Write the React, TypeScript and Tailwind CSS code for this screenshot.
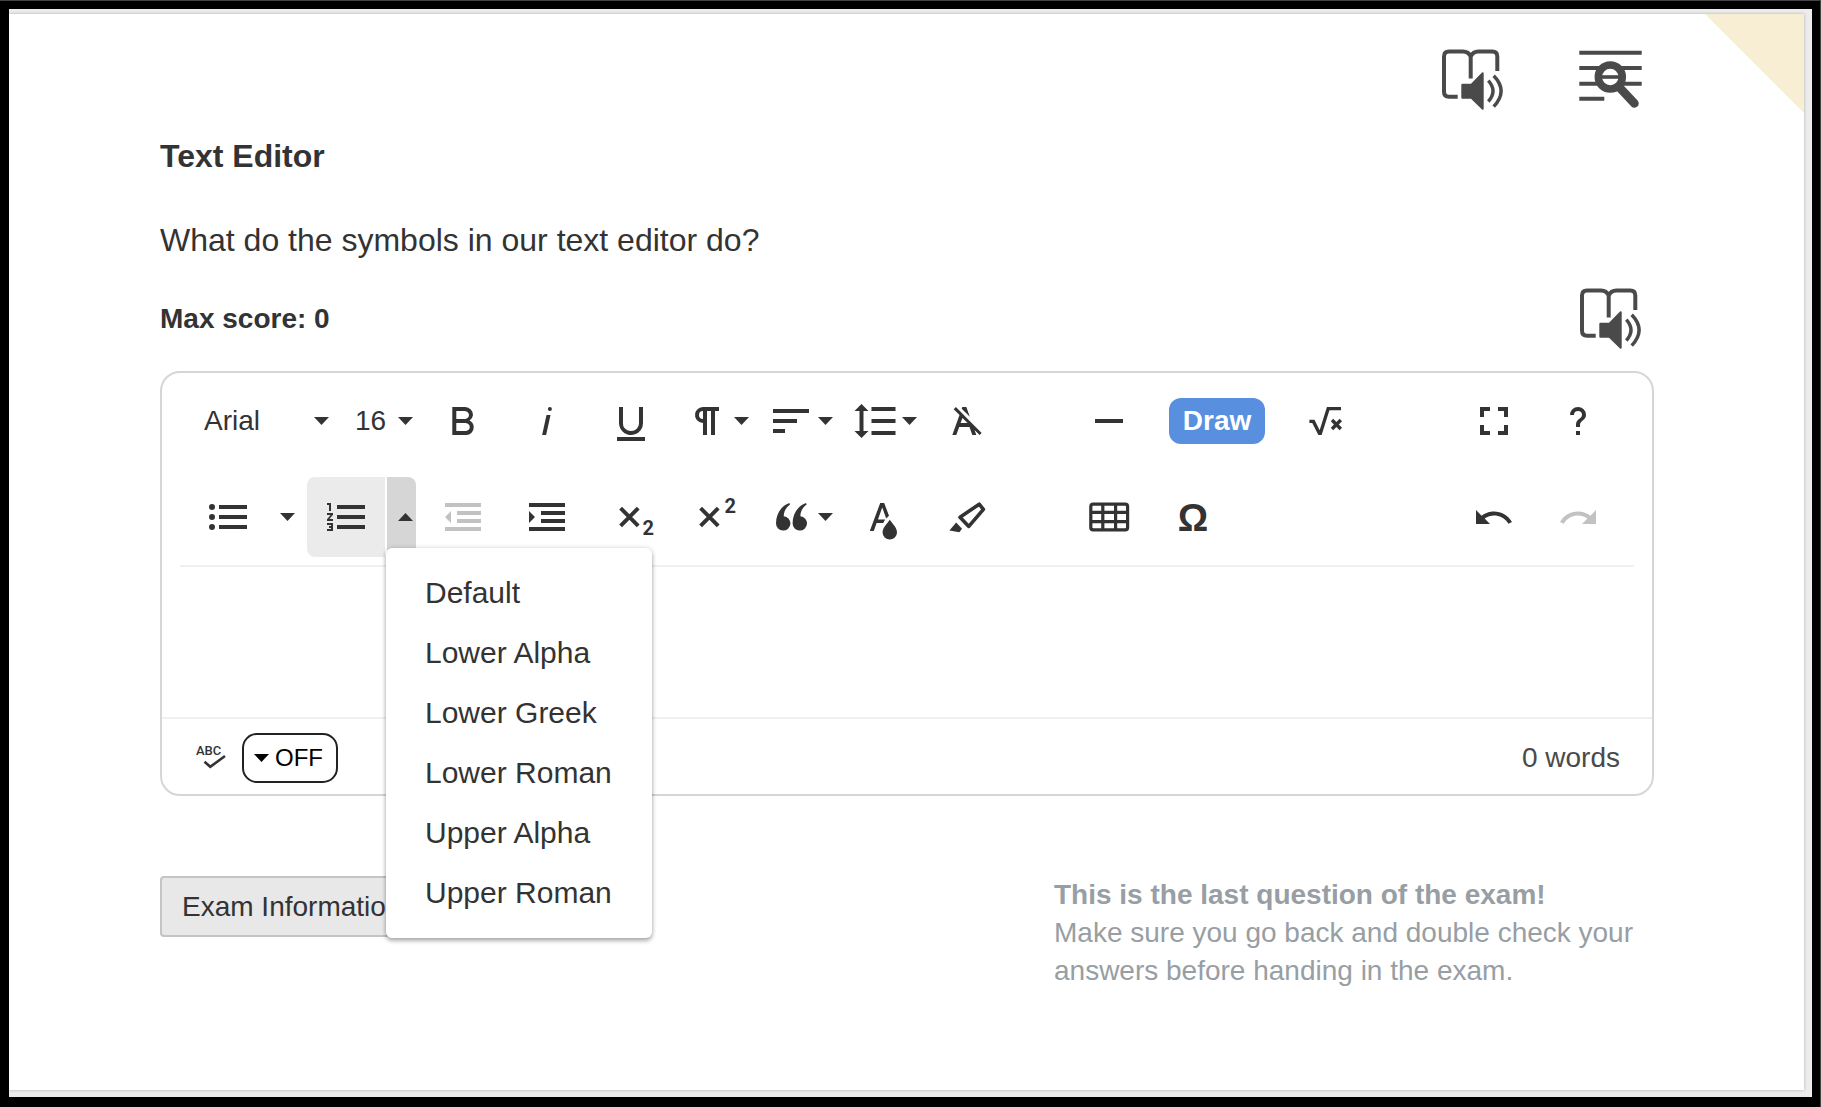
import React, { useState } from "react";

const icons = {
  bold: "M15.25,11.8h0A3.68,3.68,0,0,0,17,9a3.93,3.93,0,0,0-3.86-4H6.65V19h7a3.74,3.74,0,0,0,3.7-3.78V15.1A3.64,3.64,0,0,0,15.25,11.8ZM8.65,7h4.2a2.09,2.09,0,0,1,2,1.3,2.09,2.09,0,0,1-1.37,2.61,2.23,2.23,0,0,1-.63.09H8.65Zm4.6,10H8.65V13h4.6a2.09,2.09,0,0,1,2,1.3,2.09,2.09,0,0,1-1.37,2.61A2.23,2.23,0,0,1,13.25,17Z",
  italic: "M11.76,9h2l-2.2,10h-2Zm1.68-4a1,1,0,1,0,1,1,1,1,0,0,0-1-1Z",
  underline:
    "M19,20v2H5V20Zm-3-6.785a4,4,0,0,1-5.74,3.4A3.75,3.75,0,0,1,8,13.085V5.005H6v8.21a6,6,0,0,0,8,5.44,5.851,5.851,0,0,0,4-5.65v-8H16ZM16,5v0h2V5ZM8,5H6v0H8Z",
  paragraph:
    "M10.15,5A4.11,4.11,0,0,0,6.08,8.18,4,4,0,0,0,10,13v6h2V7h2V19h2V7h2V5ZM8,9a2,2,0,0,1,2-2v4A2,2,0,0,1,8,9Z",
  align: "M3,6V8H21V6ZM3,13H15V11H3ZM3,18H9V16H3Z",
  lineHeight:
    "M6.25,7h2.5L5.25,3.5,1.75,7h2.5V17H1.75l3.5,3.5L8.75,17H6.25Zm4-2V7h12V5Zm0,14h12V17h-12Zm0-6h12V11h-12Z",
  clear:
    "M11.48,10.09l-1.2-1.21L8.8,7.41,6.43,5,5.37,6.1,8.25,9,4.66,19h2l1.43-4h5.14l1.43,4h2l-.89-2.51L18.27,19l1.07-1.06L14.59,13.2ZM8.8,13l.92-2.56L12.27,13Zm.56-7.15L9.66,5h2l1.75,4.9Z",
  rule: "M5,11H19V13H5Z",
  fullscreen:
    "M7,14H5v5h5V17H7ZM5,10H7V7h3V5H5Zm12,7H14v2h5V14H17ZM14,5V7h3v3h2V5Z",
  help: "M11,17h2v2H11ZM12,5a4,4,0,0,0-4,4h2a2,2,0,0,1,4,0c0,2-3,1.75-3,5v1h2v-1c0-2.25,3-2.5,3-5A4,4,0,0,0,12,5Z",
  bullets:
    "M4,5.5A1.5,1.5,0,1,0,5.5,7,1.5,1.5,0,0,0,4,5.5Zm0,5A1.5,1.5,0,1,0,5.5,12,1.5,1.5,0,0,0,4,10.5Zm0,5A1.5,1.5,0,1,0,5.5,17,1.5,1.5,0,0,0,4,15.5ZM7.5,6V8h14V6Zm0,12h14V16H7.5Zm0-5h14V11H7.5Z",
  numbers:
    "M2.5,16h2v.5h-1v1h1V18h-2v1h3V15h-3Zm1-7h1V5h-2V6h1Zm-1,2H4.3L2.5,13.1V14h3V13H3.7l1.8-2.1V10h-3Zm5-5V8h14V6Zm0,12h14V16H7.5Zm0-5h14V11H7.5Z",
  outdent: "M3,12l3,3V9ZM3,19H21V17H3ZM3,7H21V5H3ZM9,11H21V9H9ZM9,15H21V13H9Z",
  indent: "M3,9v6l3-3ZM3,19H21V17H3ZM3,7H21V5H3ZM9,11H21V9H9ZM9,15H21V13H9Z",
  quote:
    "M11.2,5C7,6.4,4.5,10.6,4.5,15.2a3.6,3.6,0,1,0,3.9-3.6C8.3,9.5,9.5,7.2,11.5,5.7ZM19.5,5c-4.2,1.4-6.7,5.6-6.7,10.2a3.6,3.6,0,1,0,3.9-3.6c-.1-2.1,1.1-4.4,3.1-5.9Z",
  textColor:
    "M5.4,19h2l1.4-4h3.3l1-1.8H9.5l2.1-6,2,5.6L15,11.4,12.6,5h-2ZM15.4,13.4c-2,2.6-3.6,4.4-3.6,6.3a3.6,3.6,0,0,0,7.2,0C19,17.8,17.4,16,15.4,13.4Z",
  undo: "M10.4,9.4c-1.7,0.3-3.2,0.9-4.6,2L3,8.5v7h7l-2.7-2.7c3.7-2.6,8.8-1.8,11.5,1.9c0.2,0.2,0.3,0.5,0.4,0.7l1.8-0.9C18.8,10.8,14.6,8.7,10.4,9.4z",
  redo: "M13.6,9.4c1.7,0.3,3.2,0.9,4.6,2L21,8.5v7h-7l2.7-2.7C13,10.1,7.9,11,5.3,14.7c-0.2,0.2-0.3,0.5-0.4,0.7L3,14.5C5.1,10.8,9.3,8.7,13.6,9.4z",
};

function Icon({ d, children }: { d?: string; children?: React.ReactNode }) {
  return (
    <svg viewBox="0 0 24 24" className="h-12 w-12 shrink-0 fill-current" aria-hidden="true">
      {d ? <path d={d} /> : children}
    </svg>
  );
}

function Caret({ up = false }: { up?: boolean }) {
  return (
    <svg viewBox="0 0 15 8" className="h-2 w-[15px] shrink-0 fill-current" aria-hidden="true">
      <path d={up ? "M0 8 7.5 0 15 8Z" : "M0 0 7.5 8 15 0Z"} />
    </svg>
  );
}

function Tool({
  label,
  d,
  children,
  disabled,
}: {
  label: string;
  d?: string;
  children?: React.ReactNode;
  disabled?: boolean;
}) {
  return (
    <button
      type="button"
      aria-label={label}
      title={label}
      disabled={disabled}
      className="flex h-20 w-[84px] shrink-0 items-center justify-center disabled:text-[#c2c2c2]"
    >
      <Icon d={d}>{children}</Icon>
    </button>
  );
}

function DropTool({ label, d }: { label: string; d: string }) {
  return (
    <button
      type="button"
      aria-label={label}
      title={label}
      aria-haspopup="menu"
      className="flex h-20 w-[84px] shrink-0 items-center gap-[3px] pl-[10px]"
    >
      <Icon d={d} />
      <Caret />
    </button>
  );
}

function ToolSelect({ label, options, className }: { label: string; options: string[]; className: string }) {
  return (
    <div className={"relative flex shrink-0 items-center " + className}>
      <select
        aria-label={label}
        className="h-12 w-full appearance-none bg-transparent pl-[18px] text-[28px] leading-10"
      >
        {options.map((o) => (
          <option key={o}>{o}</option>
        ))}
      </select>
      <span className="pointer-events-none absolute right-2">
        <Caret />
      </span>
    </div>
  );
}

function ReadAloudIcon() {
  return (
    <svg viewBox="0 0 64 64" className="h-16 w-16" fill="none" stroke="currentColor" aria-hidden="true">
      <path
        d="M17.7 48.7H9q-5 0-5-5V8.5q0-5 5-5H23q5.5 0 7.7 5V30.5M30.7 8.5q2.2-5 7.7-5H52.3q5 0 5 5V23"
        strokeWidth="4"
      />
      <path
        d="M22.5 35.7H31L42 24.5q1.700-.8 1.700 1V60.500q0 1.800-1.700 1L31 50.700H22.500q-1.200 0-1.200-1.200V37q0-1.300 1.200-1.300Z"
        fill="currentColor"
        stroke="none"
      />
      <path d="M48.3 32.7Q57.7 43 48.3 53.5M53.7 27.7Q68.5 43 53.7 58.7" strokeWidth="3.4" />
    </svg>
  );
}

function FindInTextIcon() {
  return (
    <svg viewBox="0 0 64 64" className="h-16 w-16" fill="none" stroke="currentColor" aria-hidden="true">
      <path d="M1.3 4.7H63.7M1.3 20H63.7M1.3 35.7H63.7M1.3 50.7H26.3" strokeWidth="4" />
      <circle cx="32.3" cy="29" r="12" fill="white" strokeWidth="7.5" />
      <path d="M23 29H42" strokeWidth="3.6" />
      <path d="M42 40 56.5 55.5" strokeWidth="8.5" strokeLinecap="round" />
    </svg>
  );
}

const listStyles = ["Default", "Lower Alpha", "Lower Greek", "Lower Roman", "Upper Alpha", "Upper Roman"];

function OrderedListTool() {
  const [open, setOpen] = useState(true);
  return (
    <div className="mr-[5px] flex h-20 shrink-0 gap-0.5">
      <button
        type="button"
        aria-label="Ordered list"
        title="Ordered list"
        className="flex w-[78px] items-center justify-center rounded-l-lg bg-[#ebebeb]"
      >
        <Icon d={icons.numbers} />
      </button>
      <div className="relative flex w-[29px]">
        <button
          type="button"
          aria-label="Ordered list styles"
          aria-expanded={open}
          aria-haspopup="menu"
          onClick={() => setOpen(!open)}
          className="flex w-full items-center justify-end rounded-tr-lg bg-[#d6d6d6] pr-[3px]"
        >
          <Caret up={open} />
        </button>
        {open && (
          <div
            role="menu"
            className="absolute top-[71px] -left-px z-10 flex w-[266px] flex-col rounded-md bg-white pt-3.5 pb-4 shadow-[0_3px_4px_rgba(0,0,0,0.28),0_0_5px_rgba(0,0,0,0.16)]"
          >
            {listStyles.map((s) => (
              <button
                key={s}
                type="button"
                role="menuitem"
                className="h-[60px] pl-[39px] text-left text-[30px] whitespace-nowrap"
              >
                {s}
              </button>
            ))}
          </div>
        )}
      </div>
    </div>
  );
}

function Toolbar() {
  return (
    <div role="toolbar" aria-label="Formatting" className="mx-[18px] border-b-2 border-[#f0f0f0] pr-3.5 pl-1.5">
      <div className="flex h-24 items-center">
        <ToolSelect label="Font family" options={["Arial", "Georgia", "Tahoma"]} className="w-[151px]" />
        <ToolSelect label="Font size" options={["16", "18", "24"]} className="w-[84px]" />
        <Tool label="Bold" d={icons.bold} />
        <Tool label="Italic" d={icons.italic} />
        <Tool label="Underline" d={icons.underline} />
        <DropTool label="Paragraph format" d={icons.paragraph} />
        <DropTool label="Align" d={icons.align} />
        <DropTool label="Line height" d={icons.lineHeight} />
        <Tool label="Clear formatting" d={icons.clear} />
        <div className="ml-[58px] flex items-center">
          <Tool label="Insert horizontal line" d={icons.rule} />
          <button
            type="button"
            className="mx-[18px] h-[46px] w-24 rounded-xl bg-[#588fdf] text-[28px] leading-none font-bold text-white"
          >
            Draw
          </button>
          <Tool label="Insert equation">
            <path
              d="M4.2 12.2H6.2L9.2 18.2H9.7L13.6 5.8H20M15.5 11.5 19.9 16M19.9 11.5 15.5 16"
              fill="none"
              stroke="currentColor"
              strokeWidth="1.7"
            />
          </Tool>
        </div>
        <div className="ml-auto flex">
          <Tool label="Fullscreen" d={icons.fullscreen} />
          <Tool label="Help" d={icons.help} />
        </div>
      </div>
      <div className="flex h-24 items-center">
        <Tool label="Unordered list" d={icons.bullets} />
        <button
          type="button"
          aria-label="Unordered list styles"
          aria-haspopup="menu"
          className="flex h-20 w-[37px] shrink-0 items-center pl-2.5"
        >
          <Caret />
        </button>
        <OrderedListTool />
        <Tool label="Decrease indent" d={icons.outdent} disabled />
        <Tool label="Increase indent" d={icons.indent} />
        <Tool label="Subscript">
          <path d="M6.8 7.6 15.6 16.4M15.6 7.6 6.8 16.4" stroke="currentColor" strokeWidth="2" />
          <text x="17.8" y="21" className="font-[Roboto] text-[10px] font-bold">2</text>
        </Tool>
        <Tool label="Superscript">
          <path d="M4.8 7.6 13.6 16.4M13.6 7.6 4.8 16.4" stroke="currentColor" strokeWidth="2" />
          <text x="16.8" y="10" className="font-[Roboto] text-[10px] font-bold">2</text>
        </Tool>
        <DropTool label="Quote" d={icons.quote} />
        <Tool label="Text color" d={icons.textColor} />
        <Tool label="Background color">
          <path
            d="M18.1 5.6 20.2 8.2 12.9 16.7 8.5 12.1Z"
            fill="none"
            stroke="currentColor"
            strokeWidth="1.8"
            strokeLinejoin="round"
          />
          <path d="M3.2 18.8 6.6 14.8 9.5 17.9 8.2 19.6Z" />
        </Tool>
        <div className="ml-[58px] flex items-center">
          <Tool label="Insert table">
            <g fill="none" stroke="currentColor" strokeWidth="1.6">
              <rect x="2.9" y="5.6" width="18.4" height="12.8" rx="1.2" />
              <path d="M2.9 9.7H21.3M2.9 14.3H21.3M8.9 5.6V18.4M15.3 5.6V18.4" />
            </g>
          </Tool>
          <Tool label="Special characters">
            <text x="12" y="19" textAnchor="middle" className="font-['Liberation_Sans'] text-[19px] font-bold">Ω</text>
          </Tool>
        </div>
        <div className="ml-auto flex">
          <Tool label="Undo" d={icons.undo} />
          <Tool label="Redo" d={icons.redo} disabled />
        </div>
      </div>
    </div>
  );
}

function StatusBar() {
  return (
    <div className="flex h-[77px] items-center border-t-2 border-[#f0f0f0] pt-0.5 pr-8 pl-[34px]">
      <svg viewBox="0 0 30 28" className="h-7 w-[30px]" aria-hidden="true">
        <text x="0" y="11" className="fill-current font-[Roboto] text-[13px] font-medium">ABC</text>
        <path d="M8.5 17.7 14.3 22.8 29 12" fill="none" stroke="currentColor" strokeWidth="2.6" />
      </svg>
      <button
        type="button"
        aria-label="Spell check: OFF"
        className="ml-4 flex h-[50px] w-24 items-center gap-1.5 rounded-[15px] border-2 border-[#222] pl-2.5 text-2xl text-black"
      >
        <Caret />
        OFF
      </button>
      <span className="ml-auto text-[28px] text-[#4a4a4a]">0 words</span>
    </div>
  );
}

export default function App() {
  return (
    <div className="flex min-h-screen flex-col border-t border-r border-[#444] bg-black font-['Liberation_Sans',Arial,sans-serif] text-[#333]">
      <div className="mt-2 mr-2 mb-2.5 ml-[9px] flex flex-1 flex-col bg-[#ececec] pt-[5px] pr-2 pb-[7px]">
        <main className="relative flex-1 bg-white pr-[150px] pl-[151px] shadow-[0_0_3px_rgba(0,0,0,0.25)]">
          <div className="absolute top-0 right-0 h-[99px] w-[99px] bg-[#f8eed3] [clip-path:polygon(0_0,100%_0,100%_100%)]" />
          <header className="flex justify-end gap-[74px] pt-[34px] pr-3 text-[#4a4a4a]">
            <button type="button" aria-label="Read page aloud">
              <ReadAloudIcon />
            </button>
            <button type="button" aria-label="Find in text">
              <FindInTextIcon />
            </button>
          </header>
          <h1 className="mt-6 text-[32px] leading-10 font-bold">Text Editor</h1>
          <p className="mt-11 text-[32px] leading-10">What do the symbols in our text editor do?</p>
          <div className="mt-[27px] flex items-center justify-between pr-3">
            <p className="text-[28px] font-bold">Max score: 0</p>
            <button type="button" aria-label="Read question aloud" className="text-[#4a4a4a]">
              <ReadAloudIcon />
            </button>
          </div>
          <section aria-label="Answer" className="mt-5 flex flex-col rounded-[20px] border-2 border-[#d6d6d6]">
            <Toolbar />
            <textarea aria-label="Answer text" className="h-[150px] resize-none px-10 py-6 text-[32px] outline-none" />
            <StatusBar />
          </section>
          <footer className="mt-20 flex items-start justify-between pb-24">
            <button
              type="button"
              className="h-[61px] rounded-sm border-2 border-[#c4c4c4] bg-[#e8e8e8] px-5 text-[28px] whitespace-nowrap"
            >
              Exam Information
            </button>
            <div className="w-[600px] text-[28px] leading-[38px] text-[#979ea4]">
              <p className="font-bold">This is the last question of the exam!</p>
              <p>Make sure you go back and double check your answers before handing in the exam.</p>
            </div>
          </footer>
        </main>
      </div>
    </div>
  );
}
